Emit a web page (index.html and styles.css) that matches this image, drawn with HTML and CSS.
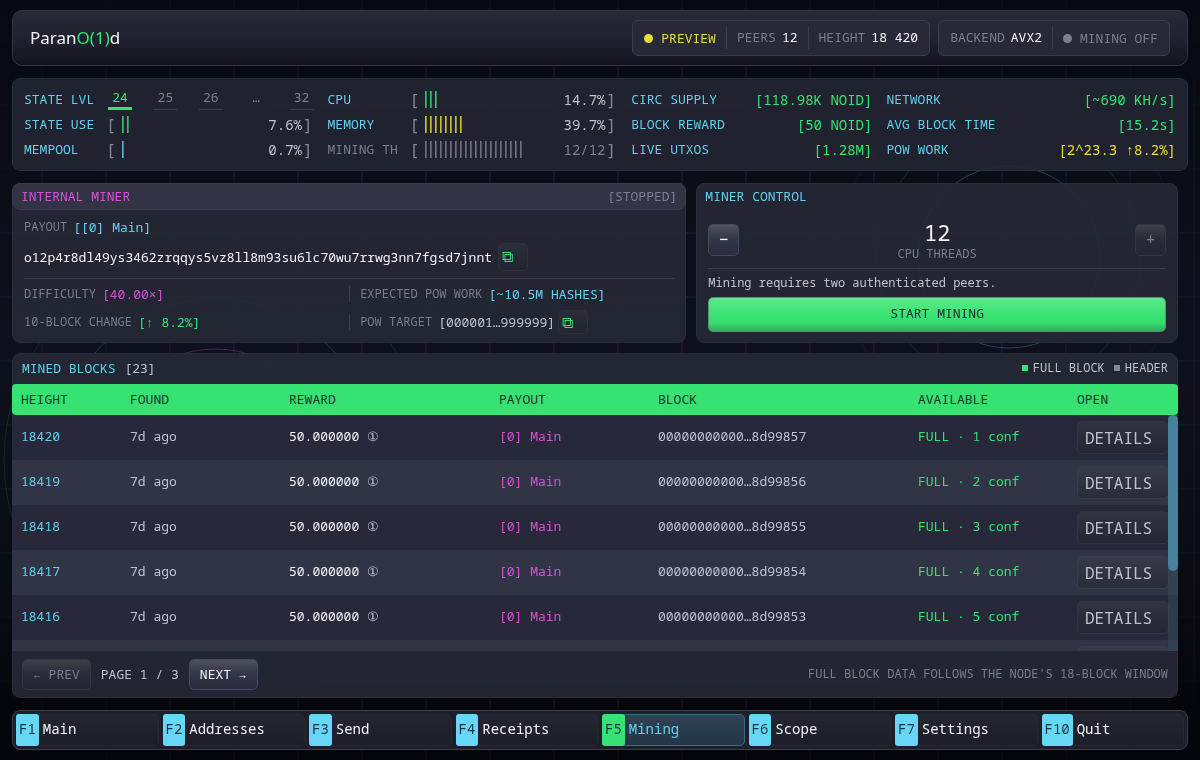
FILE: index.html
```html
<!DOCTYPE html>
<html lang="en">
<head>
<meta charset="utf-8">
<meta name="viewport" content="width=device-width, initial-scale=1">
<title>ParanO(1)d</title>
<link rel="stylesheet" href="styles.css">
</head>
<body>
<svg class="rings" aria-hidden="true">
  <g fill="none">
    <circle cx="1009" cy="257" r="91" stroke="#68d8f5" stroke-opacity=".26"/>
    <circle cx="1009" cy="257" r="132" stroke="#36e4a0" stroke-opacity=".14"/>
    <circle cx="1009" cy="257" r="171" stroke="#d850d8" stroke-opacity=".08"/>
    <circle cx="215" cy="460" r="111" stroke="#d850d8" stroke-opacity=".3"/>
    <circle cx="215" cy="460" r="161" stroke="#68d8f5" stroke-opacity=".2"/>
    <circle cx="215" cy="460" r="211" stroke="#36e474" stroke-opacity=".12"/>
  </g>
</svg>
<div class="app">
  <header class="topbar">
    <h1 class="brand">Paran<span class="green">O(1)</span>d</h1>
    <div class="pills">
      <div class="pill">
        <span class="cell yellow"><i class="dot"></i>PREVIEW</span>
        <span class="cell plain">PEERS<b>12</b></span>
        <span class="cell plain">HEIGHT<b>18 420</b></span>
      </div>
      <div class="pill">
        <span class="cell plain">BACKEND<b>AVX2</b></span>
        <span class="cell"><i class="dot"></i>MINING OFF</span>
      </div>
    </div>
  </header>

  <section class="stats" aria-label="Node status">
    <div class="stat-col">
      <div class="stat"><span class="stat-name">STATE LVL</span>
        <span class="levels"><span class="level on">24</span><span class="level">25</span><span class="level">26</span><span class="level gap">…</span><span class="level">32</span></span></div>
      <div class="stat"><span class="stat-name">STATE USE</span>
        <span class="gauge"><span class="br">[</span><i class="bars green" style="width:7px"></i><span class="num">7.6%</span><span class="br">]</span></span></div>
      <div class="stat"><span class="stat-name">MEMPOOL</span>
        <span class="gauge"><span class="br">[</span><i class="bars cyan" style="width:2px"></i><span class="num">0.7%</span><span class="br">]</span></span></div>
    </div>
    <div class="stat-col">
      <div class="stat"><span class="stat-name">CPU</span>
        <span class="gauge"><span class="br">[</span><i class="bars green" style="width:12px"></i><span class="num">14.7%</span><span class="br">]</span></span></div>
      <div class="stat"><span class="stat-name">MEMORY</span>
        <span class="gauge"><span class="br">[</span><i class="bars yellow" style="width:37px"></i><span class="num">39.7%</span><span class="br">]</span></span></div>
      <div class="stat off"><span class="stat-name">MINING TH</span>
        <span class="gauge"><span class="br">[</span><i class="bars" style="width:97px"></i><span class="num">12/12</span><span class="br">]</span></span></div>
    </div>
    <div class="stat-col">
      <div class="stat"><span class="stat-name">CIRC SUPPLY</span><span class="value green">[118.98K NOID]</span></div>
      <div class="stat"><span class="stat-name">BLOCK REWARD</span><span class="value green">[50 NOID]</span></div>
      <div class="stat"><span class="stat-name">LIVE UTXOS</span><span class="value green">[1.28M]</span></div>
    </div>
    <div class="stat-col">
      <div class="stat"><span class="stat-name">NETWORK</span><span class="value green">[~690 KH/s]</span></div>
      <div class="stat"><span class="stat-name">AVG BLOCK TIME</span><span class="value green">[15.2s]</span></div>
      <div class="stat"><span class="stat-name">POW WORK</span><span class="value yellow">[2^23.3 ↑8.2%]</span></div>
    </div>
  </section>

  <main class="main">
    <div class="pair">
      <section class="panel miner">
        <div class="miner-head"><h2 class="title magenta">INTERNAL MINER</h2><span>[STOPPED]</span></div>
        <div class="miner-body">
          <div class="line">PAYOUT <span class="cyan val">[[0] Main]</span></div>
          <div class="address"><span>o12p4r8dl49ys3462zrqqys5vz8ll8m93su6lc70wu7rrwg3nn7fgsd7jnnt</span><button class="copy" type="button" aria-label="Copy payout address">⧉</button></div>
          <div class="facts">
            <div class="fact">DIFFICULTY <span class="magenta val">[40.00×]</span></div>
            <div class="fact">EXPECTED POW WORK <span class="cyan val">[~10.5M HASHES]</span></div>
            <div class="fact">10-BLOCK CHANGE <span class="green val">[↑ 8.2%]</span></div>
            <div class="fact">POW TARGET <span class="val">[000001…999999]</span><button class="copy small" type="button" aria-label="Copy target">⧉</button></div>
          </div>
        </div>
      </section>
      <section class="panel control">
        <h2 class="title cyan">MINER CONTROL</h2>
        <div class="control-body">
          <div class="threads">
            <button class="btn step" type="button" aria-label="Fewer threads">−</button>
            <div class="count"><strong>12</strong><span>CPU THREADS</span></div>
            <button class="btn step" type="button" aria-label="More threads" disabled>+</button>
          </div>
          <p class="hint">Mining requires two authenticated peers.</p>
          <button class="start" type="button">START MINING</button>
        </div>
      </section>
    </div>

    <section class="panel blocks">
      <div class="blocks-head">
        <h2 class="title cyan">MINED BLOCKS <span class="count-tag">[23]</span></h2>
        <div class="legend"><span class="key full">FULL BLOCK</span><span class="key">HEADER</span></div>
      </div>
      <div class="table-wrap">
        <div class="scroller">
          <table>
            <colgroup><col class="c-height"><col class="c-mid"><col class="c-reward"><col class="c-mid"><col class="c-block"><col class="c-mid"><col class="c-open"></colgroup>
            <thead><tr><th>HEIGHT</th><th>FOUND</th><th>REWARD</th><th>PAYOUT</th><th>BLOCK</th><th>AVAILABLE</th><th>OPEN</th></tr></thead>
            <tbody>
              <tr><td class="cyan">18420</td><td>7d ago</td><td><span class="white">50.000000</span> ①</td><td class="magenta">[0] Main</td><td>00000000000…8d99857</td><td class="green">FULL · 1 conf</td><td><button class="details" type="button">DETAILS</button></td></tr>
              <tr><td class="cyan">18419</td><td>7d ago</td><td><span class="white">50.000000</span> ①</td><td class="magenta">[0] Main</td><td>00000000000…8d99856</td><td class="green">FULL · 2 conf</td><td><button class="details" type="button">DETAILS</button></td></tr>
              <tr><td class="cyan">18418</td><td>7d ago</td><td><span class="white">50.000000</span> ①</td><td class="magenta">[0] Main</td><td>00000000000…8d99855</td><td class="green">FULL · 3 conf</td><td><button class="details" type="button">DETAILS</button></td></tr>
              <tr><td class="cyan">18417</td><td>7d ago</td><td><span class="white">50.000000</span> ①</td><td class="magenta">[0] Main</td><td>00000000000…8d99854</td><td class="green">FULL · 4 conf</td><td><button class="details" type="button">DETAILS</button></td></tr>
              <tr><td class="cyan">18416</td><td>7d ago</td><td><span class="white">50.000000</span> ①</td><td class="magenta">[0] Main</td><td>00000000000…8d99853</td><td class="green">FULL · 5 conf</td><td><button class="details" type="button">DETAILS</button></td></tr>
              <tr><td></td><td></td><td></td><td></td><td></td><td></td><td><button class="details" type="button" aria-label="Details"></button></td></tr>
            </tbody>
          </table>
        </div>
        <div class="track" aria-hidden="true"><div class="thumb"></div></div>
      </div>
      <div class="pager">
        <button class="btn" type="button" disabled>← PREV</button>
        <span>PAGE 1 / 3</span>
        <button class="btn" type="button">NEXT →</button>
        <span class="note">FULL BLOCK DATA FOLLOWS THE NODE'S 18-BLOCK WINDOW</span>
      </div>
    </section>
  </main>

  <nav class="keys">
    <button class="fkey" type="button"><kbd>F1</kbd>Main</button>
    <button class="fkey" type="button"><kbd>F2</kbd>Addresses</button>
    <button class="fkey" type="button"><kbd>F3</kbd>Send</button>
    <button class="fkey" type="button"><kbd>F4</kbd>Receipts</button>
    <button class="fkey active" type="button" aria-current="page"><kbd>F5</kbd>Mining</button>
    <button class="fkey" type="button"><kbd>F6</kbd>Scope</button>
    <button class="fkey" type="button"><kbd>F7</kbd>Settings</button>
    <button class="fkey" type="button"><kbd>F10</kbd>Quit</button>
  </nav>
</div>
</body>
</html>
```
FILE: styles.css
```css
:root {
  --cyan: #62cfec;
  --green: #36e272;
  --magenta: #d452d6;
  --yellow: #e8dc38;
  --muted: #7b7d91;
  --text: #bfc1d1;
  --white: #f2f3f8;
  --line: #3b3d4f;
}
* { box-sizing: border-box; }
body {
  margin: 0;
  color: var(--text);
  font: 13px/18px "Noto Sans Mono", "DejaVu Sans Mono", monospace;
  background: linear-gradient(180deg, #060911 0%, #0a0d16 20%, #0f101d 48%, #0a0c15 72%, #04050a 100%) fixed;
}
body::before {
  content: "";
  position: fixed;
  inset: 0;
  z-index: -2;
  background:
    repeating-linear-gradient(90deg, transparent 0 41px, rgba(190, 60, 190, .11) 41px 43px, transparent 43px 64px),
    repeating-linear-gradient(180deg, transparent 0 40px, rgba(70, 200, 230, .07) 40px 42px, transparent 42px 64px);
  -webkit-mask-image: radial-gradient(ellipse 70% 75% at center, #000 45%, transparent 100%);
  mask-image: radial-gradient(ellipse 70% 75% at center, #000 45%, transparent 100%);
}
button { font: inherit; color: inherit; margin: 0; cursor: pointer; }
h1, h2, p { margin: 0; font-weight: 400; }
.green { color: var(--green); }
.cyan { color: var(--cyan); }
.magenta { color: var(--magenta); }
.yellow { color: var(--yellow); }
.white { color: var(--white); }
.title { font-size: 13px; }

.rings { position: fixed; inset: 0; width: 100%; height: 100%; z-index: -1; }
.app {
  height: 100vh;
  min-height: 640px;
  padding: 10px 12px;
  display: flex;
  flex-direction: column;
  gap: 12px;
}

.topbar {
  flex: none;
  display: flex;
  align-items: center;
  justify-content: space-between;
  padding: 9px 17px;
  border: 1px solid #343642;
  border-radius: 10px;
  background: linear-gradient(180deg, #272a36 0%, #1f212e 55%, #12131e 100%);
}
.brand { font: 17px/22px "Noto Sans", sans-serif; color: var(--white); }
.pills { display: flex; gap: 8px; }
.pill {
  display: flex;
  align-items: center;
  height: 36px;
  padding: 0 1px;
  border: 1px solid var(--line);
  border-radius: 6px;
  background: #272838;
  color: var(--muted);
}
.cell { display: flex; align-items: center; gap: 6px; padding: 2px 10px; }
.cell.plain { padding: 1px 10px 3px; }
.cell + .cell { border-left: 1px solid var(--line); }
.cell b { font-weight: 400; color: var(--white); }
.cell.yellow { color: var(--yellow); }
.dot { width: 9px; height: 9px; margin-right: 2px; border-radius: 50%; background: currentColor; }

.stats {
  flex: none;
  display: grid;
  grid-template-columns: 6fr 6fr 5fr 6fr;
  gap: 14px;
  padding: 8px 11px;
  border: 1px solid #1d3541;
  border-radius: 8px;
  background: rgba(36, 37, 50, .9);
}
.stat { display: flex; align-items: center; height: 25px; white-space: nowrap; }
.stat-name { width: 82px; padding-bottom: 2px; color: var(--cyan); }
.value { margin-left: auto; font-size: 14px; }
.levels { flex: 1; display: flex; justify-content: space-between; padding: 0 0 2px 2px; }
.level {
  width: 24px;
  padding-bottom: 2px;
  text-align: center;
  color: var(--muted);
  border-bottom: 1px solid var(--line);
}
.level.on { color: var(--green); border-bottom: 3px solid var(--green); padding-bottom: 1px; }
.level.gap { border-color: transparent; }
.gauge { flex: 1; display: flex; align-items: center; padding-right: 1px; }
.br { font-size: 16px; color: #85879a; }
.bars {
  height: 17px;
  margin-left: 6px;
  opacity: .85;
  background: repeating-linear-gradient(90deg, currentColor 0 1px, color-mix(in srgb, currentColor 65%, transparent) 1px 2px, transparent 2px 5px);
}
.num { margin: 0 1px 0 auto; font-size: 14px; }
.off, .off .stat-name { color: var(--muted); }

.main { flex: 1; min-height: 0; display: flex; flex-direction: column; gap: 10px; padding-right: 10px; }
.pair { flex: none; display: grid; grid-template-columns: 7fr 5fr; gap: 10px; }
.panel {
  border: 1px solid #2a2c3a;
  border-radius: 8px;
  background: rgba(37, 39, 53, .94);
}
.miner-head {
  display: flex;
  justify-content: space-between;
  margin: -1px -1px 0;
  padding: 3px 8px 4px;
  border: 1px solid var(--line);
  border-radius: 8px;
  background: #323446;
  color: var(--muted);
}
.miner-body { padding: 8px 11px; color: var(--muted); font-size: 12px; }
.line, .fact { display: flex; align-items: center; gap: 6px; }
.val { font-size: 13px; }
.fact .val:not(.cyan):not(.green):not(.magenta) { color: var(--text); }
.address {
  display: flex;
  align-items: center;
  gap: 6px;
  margin-top: 7px;
  padding-bottom: 7px;
  border-bottom: 1px solid var(--line);
  color: var(--white);
  font-size: 13px;
}
.copy {
  width: 30px;
  height: 28px;
  padding: 0 0 3px 3px;
  border: 1px solid #2e303e;
  border-radius: 5px;
  background: linear-gradient(180deg, #2b2d3b, #222431);
  color: var(--green);
  font-size: 16px;
  line-height: 20px;
  text-align: left;
}
.copy.small { height: 24px; padding-bottom: 0; margin-left: -3px; }
.facts { display: grid; grid-template-columns: 1fr 1fr; gap: 4px 0; padding-top: 3px; }
.fact { height: 24px; }
.fact:nth-child(even)::before { content: ""; width: 1px; height: 16px; margin-right: 4px; background: var(--line); }

.control { padding: 3px 8px 10px; display: flex; flex-direction: column; }
.control-body { display: flex; flex-direction: column; padding: 0 3px; margin-top: 13px; font-size: 12px; }
.threads {
  display: flex;
  align-items: center;
  justify-content: space-between;
  padding-bottom: 6px;
  border-bottom: 1px solid var(--line);
}
.count { display: flex; flex-direction: column; align-items: center; color: var(--muted); line-height: 16px; }
.count strong { font-size: 22px; line-height: 28px; font-weight: 400; color: var(--white); }
.btn {
  height: 31px;
  padding: 0 10px;
  border: 1px solid #46485b;
  border-radius: 5px;
  background: linear-gradient(180deg, #50525f 0%, #34364a 45%, #2a2c3c 100%);
  color: var(--white);
}
.btn:disabled { border-color: #343644; background: linear-gradient(180deg, #40414b 0%, #292b37 45%, #232532 100%); color: var(--muted); }
.step { width: 31px; height: 32px; padding: 0 0 2px; font-size: 16px; }
.hint { padding: 5px 0; }
.start {
  height: 35px;
  padding-bottom: 4px;
  border: 1px solid #5d8f75;
  border-radius: 5px;
  background: linear-gradient(180deg, #5aeb8c 0%, #38e271 55%, #36dd6e 75%, #2fae5c 100%);
  color: #1c2a2b;
  font-size: 13px;
}

.blocks { flex: 1; min-height: 0; display: flex; flex-direction: column; }
.blocks-head { display: flex; align-items: center; justify-content: space-between; height: 30px; padding: 0 9px 2px; }
.count-tag { margin-left: 1px; color: var(--text); }
.legend { display: flex; gap: 9px; font-size: 12px; }
.key { display: flex; align-items: center; gap: 5px; }
.key::before { content: ""; width: 6px; height: 6px; background: #85879a; }
.key.full::before { background: var(--green); }
.table-wrap { position: relative; flex: 1; min-height: 0; margin: 0 -1px; }
.scroller { height: 100%; overflow-y: auto; scrollbar-width: none; }
table { width: 100%; table-layout: fixed; border-collapse: separate; border-spacing: 0; }
.c-height { width: 109px; }
.c-mid { width: 159px; }
.c-reward { width: 210px; }
.c-open { width: 110px; }
th, td { padding: 0 9px; text-align: left; font-weight: 400; white-space: nowrap; }
th { position: sticky; top: 0; z-index: 1; height: 31px; padding-bottom: 2px; background: var(--green); color: #1d3230; }
th:first-child { border-radius: 4px 0 0 4px; }
th:last-child { border-radius: 0 4px 4px 0; }
td { height: 45px; padding-bottom: 4px; background: #272839; }
td:last-child { padding-bottom: 0; }
tr:nth-child(even) td { background: #313445; }
.details {
  display: block;
  width: 92px;
  height: 33px;
  padding: 0 7px;
  border: 1px solid #323443;
  border-radius: 5px;
  background: linear-gradient(180deg, #313341, #242633);
  font-size: 16px;
  text-align: left;
}
tr:nth-child(even) .details { border-color: #3a3c4c; background: linear-gradient(180deg, #383a49, #2a2c3a); }
.track { position: absolute; top: 31px; right: 0; bottom: 0; width: 10px; background: rgba(53, 78, 97, .5); z-index: 2; }
.thumb { height: 66%; border-radius: 5px; background: #47809a; }
.pager { flex: none; display: flex; align-items: center; gap: 10px; height: 46px; padding: 0 9px; }
.note { margin-left: auto; font-size: 12px; color: var(--muted); }

.keys {
  flex: none;
  display: grid;
  grid-template-columns: repeat(8, 1fr);
  gap: 4px;
  padding: 3px;
  border: 1px solid #3c3e4a;
  border-radius: 8px;
  background: #1d1f2b;
}
.fkey {
  display: flex;
  align-items: stretch;
  gap: 4px;
  height: 32px;
  padding: 0;
  border: 1px solid #262834;
  border-radius: 5px;
  background: linear-gradient(180deg, #232531, #1c1e2a);
  color: var(--white);
  font-size: 14px;
  line-height: 28px;
}
.fkey kbd {
  margin: -1px 0 -1px -1px;
  padding: 0 3px;
  border-radius: 3px;
  background: #66d8f6;
  color: #1b3545;
  font: inherit;
  line-height: 30px;
}
.fkey.active { border-color: #386c80; background: linear-gradient(180deg, #304355, #223645); color: var(--cyan); }
.fkey.active kbd { background: var(--green); }
```
